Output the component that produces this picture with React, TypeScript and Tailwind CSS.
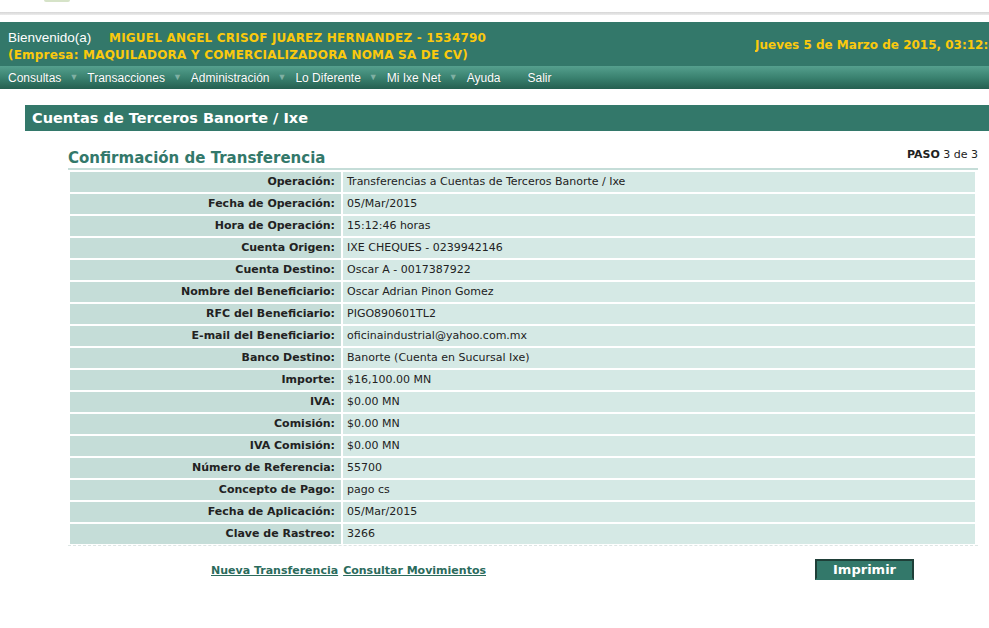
import React from "react";

const rows: [string, string][] = [
  ["Operación:", "Transferencias a Cuentas de Terceros Banorte / Ixe"],
  ["Fecha de Operación:", "05/Mar/2015"],
  ["Hora de Operación:", "15:12:46 horas"],
  ["Cuenta Origen:", "IXE CHEQUES - 0239942146"],
  ["Cuenta Destino:", "Oscar A - 0017387922"],
  ["Nombre del Beneficiario:", "Oscar Adrian Pinon Gomez"],
  ["RFC del Beneficiario:", "PIGO890601TL2"],
  ["E-mail del Beneficiario:", "oficinaindustrial@yahoo.com.mx"],
  ["Banco Destino:", "Banorte (Cuenta en Sucursal Ixe)"],
  ["Importe:", "$16,100.00 MN"],
  ["IVA:", "$0.00 MN"],
  ["Comisión:", "$0.00 MN"],
  ["IVA Comisión:", "$0.00 MN"],
  ["Número de Referencia:", "55700"],
  ["Concepto de Pago:", "pago cs"],
  ["Fecha de Aplicación:", "05/Mar/2015"],
  ["Clave de Rastreo:", "3266"],
];

const menu = ["Consultas", "Transacciones", "Administración", "Lo Diferente", "Mi Ixe Net"];

const verdana = "font-['Verdana','DejaVu_Sans',sans-serif]";
const helv = "font-['Liberation_Sans',Arial,sans-serif]";

export default function App() {
  return (
    <div className="w-[989px] h-[628px] overflow-hidden bg-white relative">
      {/* top strip */}
      <div className="h-[22px] relative">
        <div className="absolute left-[44px] top-0 w-[26px] h-[2px] rounded-b-full bg-[#d6e3c8]" />
        <div className="absolute left-0 right-0 top-[12px] h-[3px] bg-gradient-to-b from-[#d6d6d6] to-[#ececec]" />
      </div>
      {/* header */}
      <div className="h-[44px] bg-[#33786a] flex items-center justify-between whitespace-nowrap">
        <div className="pl-[8px] pt-[2px]">
          <div className="flex items-baseline">
            <span className={`${helv} text-[13.5px] text-white w-[101px]`}>Bienvenido(a)</span>
            <span className={`${verdana} text-[12px] tracking-[0.2px] font-bold text-[#fbc90d]`}>MIGUEL ANGEL CRISOF JUAREZ HERNANDEZ - 1534790</span>
          </div>
          <div className={`${verdana} text-[12px] tracking-[0.2px] font-bold text-[#fbc90d] leading-[14px]`}>(Empresa: MAQUILADORA Y COMERCIALIZADORA NOMA SA DE CV)</div>
        </div>
        <div className={`${verdana} text-[12px] font-bold text-[#fbc90d] pt-[1px] w-[234px] overflow-hidden`}>Jueves 5 de Marzo de 2015, 03:12:46</div>
      </div>
      {/* menu */}
      <div className={`h-[23px] bg-gradient-to-b from-[#55a08e] via-[#3a8270] to-[#255f50] flex items-center pl-[8px] ${helv} text-[12px] text-white whitespace-nowrap`}>
        {menu.map((m) => (
          <React.Fragment key={m}>
            <span className="[text-shadow:0_0_1px_rgba(0,0,0,0.3)]">{m}</span>
            <span className="text-[9px] text-[#7fb0a3] ml-[8px] mr-[9px]">▼</span>
          </React.Fragment>
        ))}
        <span className="[text-shadow:0_0_1px_rgba(0,0,0,0.3)]">Ayuda</span>
        <span className="ml-[27px] [text-shadow:0_0_1px_rgba(0,0,0,0.3)]">Salir</span>
      </div>
      {/* section bar */}
      <div className="mt-[16px] ml-[25px] h-[26px] bg-[#33786a] flex items-center pl-[7px] pt-[2px]">
        <span className={`${verdana} text-[14.5px] font-bold text-white`}>Cuentas de Terceros Banorte / Ixe</span>
      </div>
      {/* content */}
      <div className={`ml-[68px] w-[910px] ${verdana}`}>
        <div className="flex items-end justify-between mt-[16px] border-b-2 border-[#c5ddd8] pb-[1px]">
          <span className="text-[15px] font-bold text-[#33786a] leading-[18px]">Confirmación de Transferencia</span>
          <span className="text-[11px] text-[#222] pb-[3px]"><b>PASO</b> 3 de 3</span>
        </div>
        <div className="pl-[2px] pr-[3px] pt-[2px] flex flex-col gap-[2px]">
          {rows.map(([l, v]) => (
            <div key={l} className="flex gap-[2px] h-[20px] text-[11px] leading-[20px] text-[#222]">
              <div className="w-[271px] bg-[#c5ddd8] text-right pr-[6px] font-bold">{l}</div>
              <div className="flex-1 bg-[#d5e9e5] pl-[4px]">{v}</div>
            </div>
          ))}
        </div>
        <div className="mt-[1px] border-t border-dashed border-[#dde6e4]" />
        <div className="flex items-center mt-[13px] h-[22px]">
          <div className="ml-[143px] pt-[4px] flex gap-[5px] text-[11px] font-bold text-[#2b6b5c] underline">
            <span>Nueva Transferencia</span>
            <span>Consultar Movimientos</span>
          </div>
          <button className="ml-[329px] w-[99px] h-[21px] bg-[#33786a] border-2 border-[#1f3f38] border-b-[#33786a] border-r-[#1f3f38] text-white text-[13px] leading-[15px] font-bold">Imprimir</button>
        </div>
      </div>
    </div>
  );
}
